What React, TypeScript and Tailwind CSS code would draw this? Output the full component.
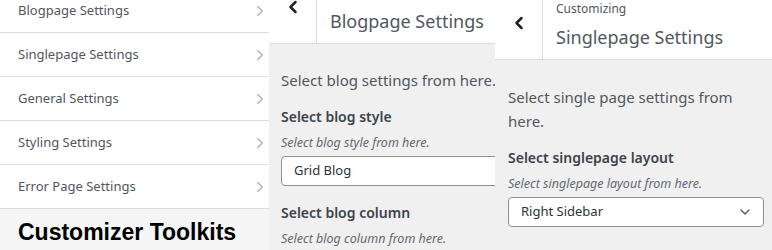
import { ChevronRight, ChevronLeft, ChevronDown } from 'lucide-react';

const font = { fontFamily: '"Noto Sans", "Open Sans", sans-serif' };

const sections = ['Blogpage Settings', 'Singlepage Settings', 'General Settings', 'Styling Settings', 'Error Page Settings'];

function SectionList() {
    return (
        <div className="w-[269px] shrink-0 h-full overflow-hidden bg-[#f5f5f5] flex flex-col">
            <div className="-mt-[11px]">
                {sections.map((name) => (
                    <div key={name} className="h-[44px] bg-white border-b border-[#dcdcde] flex items-center justify-between pl-[18px] pr-0">
                        <span className="text-[13px] text-[#50575e]">{name}</span>
                        <ChevronRight className="w-[18px] h-[18px] text-[#a7aaad]" strokeWidth={1.5} />
                    </div>
                ))}
            </div>
            <div className="pl-[18px] pt-[12px]">
                <h2 className="text-[23px] font-bold text-black leading-none whitespace-nowrap" style={{ fontFamily: '"Liberation Sans", Arial, sans-serif' }}>
                    Customizer Toolkits
                </h2>
            </div>
        </div>
    );
}

function PanelHeader({ title, shifted }: { title: string; shifted?: boolean }) {
    return (
        <div className={`flex h-[60px] bg-white border-b border-[#dcdcde] ${shifted ? '-mt-[16px]' : ''}`}>
            <div className="w-[48px] shrink-0 border-r border-[#dcdcde] flex justify-center pt-[13px]">
                <ChevronLeft className="w-[20px] h-[20px] text-[#1d2327]" strokeWidth={3} />
            </div>
            <div className="pl-[13px] pt-[1px] whitespace-nowrap">
                <div className="text-[12px] text-[#50575e] leading-[16px]">Customizing</div>
                <div className="text-[18px] text-[#50575e] leading-[28px] mt-[6px]">{title}</div>
            </div>
        </div>
    );
}

function Field({ label, help, value, chevron }: { label: string; help: string; value?: string; chevron?: boolean }) {
    return (
        <div className="mb-[17px]">
            <div className="text-[14px] font-semibold text-[#3c434a] leading-[20px] whitespace-nowrap">{label}</div>
            <div className="text-[12.5px] italic text-[#646970] leading-[18px] mt-[7px] whitespace-nowrap">{help}</div>
            {value && (
                <div className="mt-[4px] h-[30px] bg-white border border-[#8c8f94] rounded-[4px] flex items-center justify-between pl-[12px] pr-[10px]">
                    <span className="text-[13px] text-[#2c3338]">{value}</span>
                    {chevron && <ChevronDown className="w-[16px] h-[16px] text-[#50575e]" strokeWidth={2} />}
                </div>
            )}
        </div>
    );
}

export default function App() {
    return (
        <div className="w-[772px] h-[250px] flex overflow-hidden bg-[#f0f0f1]" style={font}>
            <SectionList />

            <div className="w-[226px] shrink-0 h-full overflow-hidden bg-[#f0f0f1]">
                <div className="w-[260px]">
                    <PanelHeader title="Blogpage Settings" shifted />
                    <div className="pl-[12px] pt-[24px]">
                        <p className="text-[15px] text-[#50575e] leading-[24px] mb-[15px] whitespace-nowrap">Select blog settings from here.</p>
                        <Field label="Select blog style" help="Select blog style from here." value="Grid Blog" />
                        <Field label="Select blog column" help="Select blog column from here." />
                    </div>
                </div>
            </div>

            <div className="flex-1 h-full overflow-hidden bg-[#f0f0f1]">
                <PanelHeader title="Singlepage Settings" />
                <div className="pl-[13px] pr-[8px] pt-[25px]">
                    <p className="text-[15px] text-[#50575e] leading-[24px] mb-[15px] pr-[20px]">Select single page settings from here.</p>
                    <Field label="Select singlepage layout" help="Select singlepage layout from here." value="Right Sidebar" chevron />
                </div>
            </div>
        </div>
    );
}
